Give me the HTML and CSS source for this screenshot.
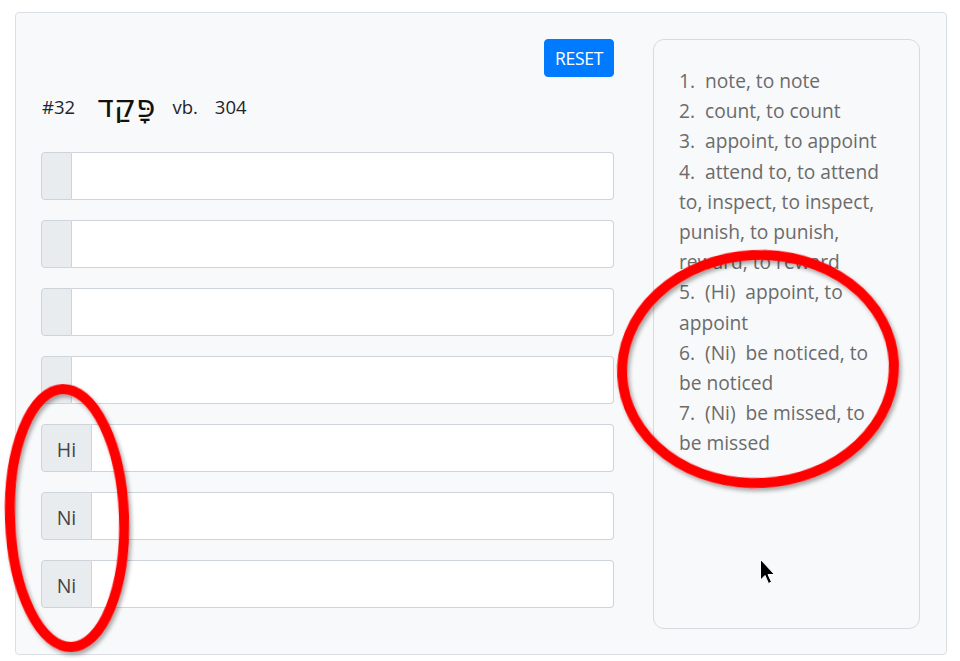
FILE: index.html
```html
<!DOCTYPE html>
<html>
<head>
<meta charset="utf-8">
<link rel="stylesheet" href="styles.css">
</head>
<body>
<div class="card">
  <div class="left">
    <div class="toolbar"><button class="btn">RESET</button></div>
    <div class="head">
      <span class="num">#32</span>
      <span class="heb" dir="rtl">פָּקַד</span>
      <span class="pos">vb.</span>
      <span class="cnt">304</span>
    </div>
    <div class="group"><span class="pre"></span><input class="field" type="text"></div>
    <div class="group"><span class="pre"></span><input class="field" type="text"></div>
    <div class="group"><span class="pre"></span><input class="field" type="text"></div>
    <div class="group"><span class="pre"></span><input class="field" type="text"></div>
    <div class="group"><span class="pre wide">Hi</span><input class="field" type="text"></div>
    <div class="group"><span class="pre wide">Ni</span><input class="field" type="text"></div>
    <div class="group"><span class="pre wide">Ni</span><input class="field" type="text"></div>
  </div>
  <div class="panel">
    <p>1.&nbsp; note, to note</p>
    <p>2.&nbsp; count, to count</p>
    <p>3.&nbsp; appoint, to appoint</p>
    <p>4.&nbsp; attend to, to attend to, inspect, to inspect, punish, to punish, reward, to reward</p>
    <p>5.&nbsp; (Hi)&nbsp; appoint, to appoint</p>
    <p>6.&nbsp; (Ni)&nbsp; be noticed, to be noticed</p>
    <p>7.&nbsp; (Ni)&nbsp; be missed, to be missed</p>
  </div>
</div>
<svg class="marks" width="960" height="661" viewBox="0 0 960 661">
  <defs>
    <filter id="sh" x="-20%" y="-20%" width="140%" height="140%">
      <feDropShadow dx="2" dy="3" stdDeviation="2" flood-color="#000" flood-opacity="0.35"/>
    </filter>
  </defs>
  <ellipse cx="67" cy="518" rx="57" ry="129" fill="none" stroke="#ff0000" stroke-width="10" filter="url(#sh)" transform="rotate(-2 67 518)"/>
  <ellipse cx="758" cy="369" rx="136" ry="114" fill="none" stroke="#ff0000" stroke-width="10" filter="url(#sh)" transform="rotate(-3 758 369)"/>
  <path d="M760.5 559.5 L760.5 580 L765 575.5 L768.5 583.5 L771.5 582 L768 574.5 L774.5 574.5 Z" fill="#000" stroke="#fff" stroke-width="1"/>
</svg>
</body>
</html>
```
FILE: styles.css
```css
html, body {
  margin: 0;
  padding: 0;
  background: #fff;
}
body {
  width: 960px;
  height: 661px;
  position: relative;
  overflow: hidden;
  font-family: "Open Sans", "Noto Sans", "DejaVu Sans", sans-serif;
  color: #212529;
}
.card {
  position: absolute;
  left: 15px;
  top: 12px;
  width: 932px;
  height: 643px;
  box-sizing: border-box;
  border: 1px solid #dcdfe2;
  border-radius: 4px;
  background: #f8f9fa;
  padding: 26px 26px 26px 25px;
  display: flex;
  gap: 39px;
}
.left {
  width: 573px;
  flex: none;
  display: flex;
  flex-direction: column;
}
.toolbar {
  display: flex;
  justify-content: flex-end;
  height: 38px;
}
.btn {
  width: 70px;
  height: 38px;
  border: 1px solid #007bff;
  background: #007bff;
  color: #fff;
  border-radius: 4px;
  font-family: "Open Sans", "Noto Sans", sans-serif;
  font-size: 17.5px;
  padding: 0;
  letter-spacing: -0.3px;
}
.head {
  display: flex;
  align-items: center;
  height: 62px;
  margin-top: 0;
  margin-bottom: 16px;
  font-size: 18.5px;
  padding-left: 1px;
}
.num { margin-right: 22px; }
.heb {
  font-family: "DejaVu Sans", "Liberation Sans", sans-serif;
  font-size: 31px;
  margin-right: 17px;
  position: relative;
  top: -1px;
  color: #111;
}
.pos { margin-right: 17px; }
.group {
  display: flex;
  height: 48px;
  margin-bottom: 20px;
}
.pre {
  width: 31px;
  box-sizing: border-box;
  border: 1px solid #ced4da;
  border-radius: 4px 0 0 4px;
  background: #e9ecef;
  display: flex;
  align-items: center;
  justify-content: center;
  font-size: 19.5px;
  color: #444;
  padding-top: 3px;
}
.pre.wide { width: 51px; }
.field {
  flex: 1;
  box-sizing: border-box;
  height: 48px;
  border: 1px solid #ced4da;
  border-left: none;
  border-radius: 0 4px 4px 0;
  background: #fff;
  margin: 0;
  outline: none;
}
.panel {
  width: 267px;
  flex: none;
  height: 590px;
  box-sizing: border-box;
  border: 1px solid #d8dbde;
  border-radius: 11px;
  background: #f8f9fa;
  padding: 26px 30px 0 25px;
  color: #6b6b6b;
  font-size: 19.2px;
  line-height: 30.2px;
}
.panel p { margin: 0; }
.marks {
  position: absolute;
  left: 0;
  top: 0;
  pointer-events: none;
}
```
